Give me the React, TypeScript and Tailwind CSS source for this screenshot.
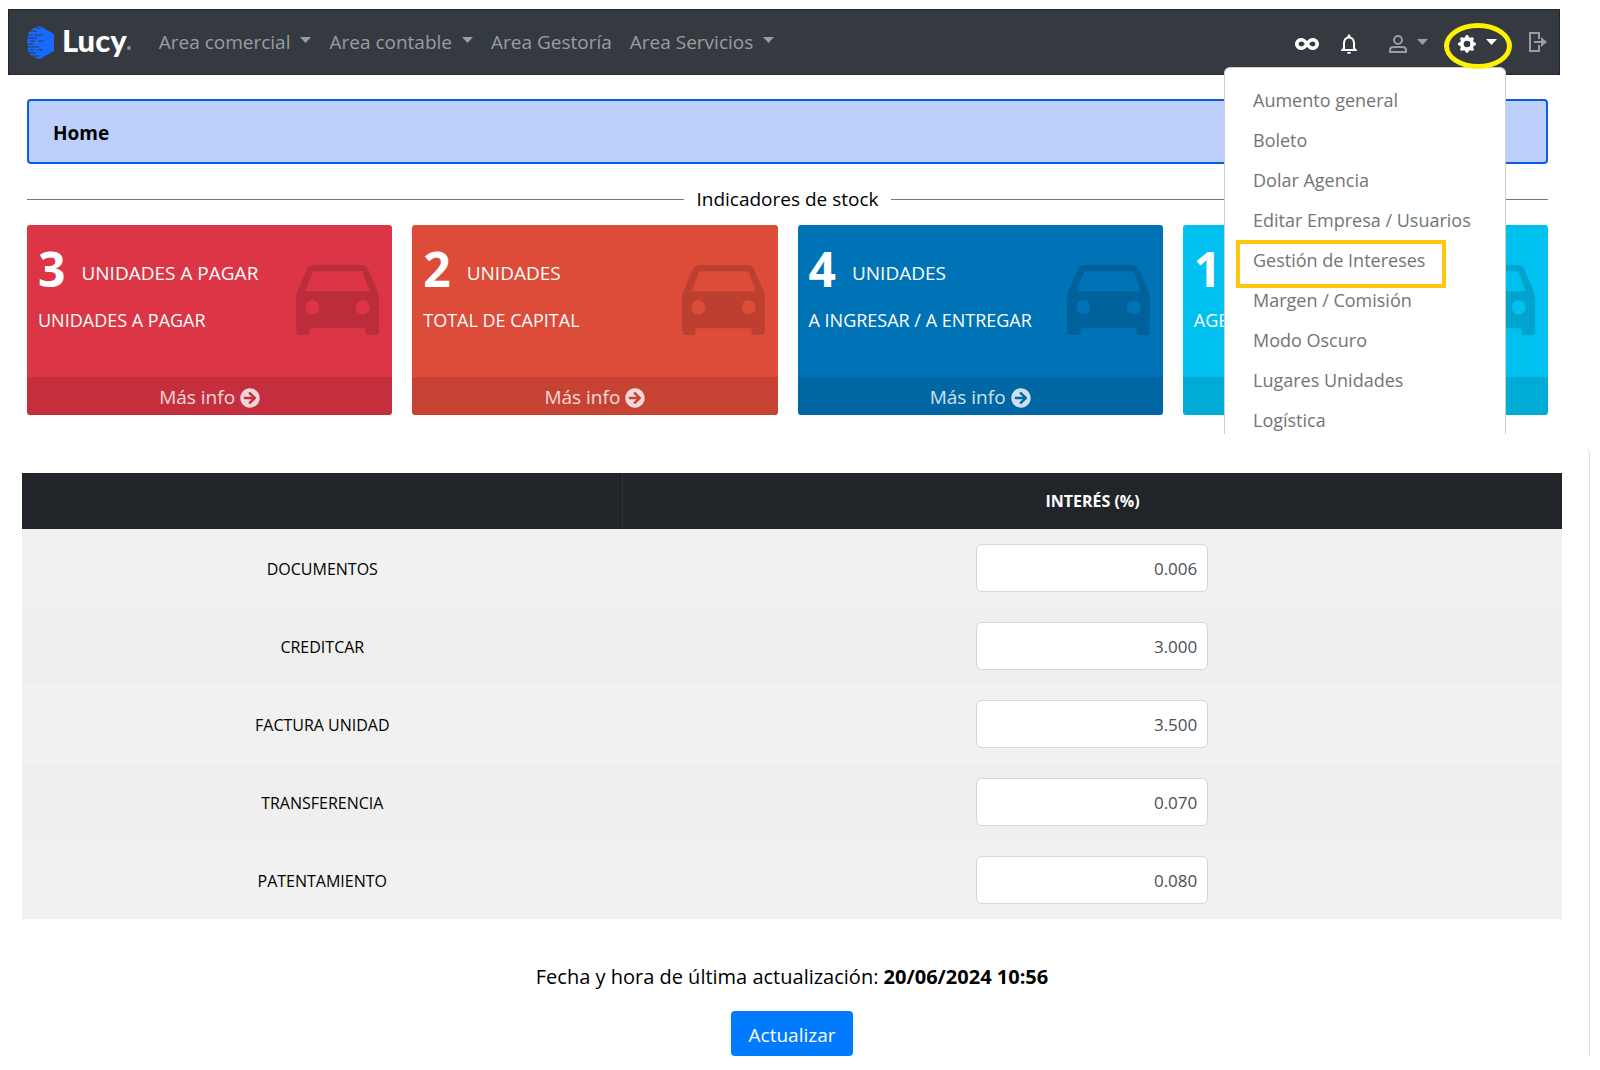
import React, { useState } from 'react';
import { FaInfinity, FaArrowCircleRight } from 'react-icons/fa';
import { MdOutlineNotifications } from 'react-icons/md';
import { BsGearFill } from 'react-icons/bs';

const navItems = [
  { label: 'Area comercial', dropdown: true },
  { label: 'Area contable', dropdown: true },
  { label: 'Area Gestoría', dropdown: false },
  { label: 'Area Servicios', dropdown: true },
];

const menuItems = [
  'Aumento general',
  'Boleto',
  'Dolar Agencia',
  'Editar Empresa / Usuarios',
  'Gestión de Intereses',
  'Margen / Comisión',
  'Modo Oscuro',
  'Lugares Unidades',
  'Logística',
];

const cards = [
  { count: 3, title: 'UNIDADES A PAGAR', subtitle: 'UNIDADES A PAGAR', color: 'bg-[#dc3545]' },
  { count: 2, title: 'UNIDADES', subtitle: 'TOTAL DE CAPITAL', color: 'bg-[#dd4b39]' },
  { count: 4, title: 'UNIDADES', subtitle: 'A INGRESAR / A ENTREGAR', color: 'bg-[#0073b7]' },
  { count: 1, title: '', subtitle: 'AGENCIA', color: 'bg-[#00c0ef]' },
];

const initialRates = [
  { id: 'documentos', label: 'DOCUMENTOS', value: '0.006' },
  { id: 'creditcar', label: 'CREDITCAR', value: '3.000' },
  { id: 'factura', label: 'FACTURA UNIDAD', value: '3.500' },
  { id: 'transferencia', label: 'TRANSFERENCIA', value: '0.070' },
  { id: 'patentamiento', label: 'PATENTAMIENTO', value: '0.080' },
];

function Caret() {
  return (
    <svg viewBox="0 0 11 6" className="mb-1 h-[6px] w-[11px] shrink-0" fill="currentColor" aria-hidden="true">
      <path d="M0 0h11L5.5 6z" />
    </svg>
  );
}

function CarIcon() {
  return (
    <svg viewBox="0 0 249 211" className="w-[83px] shrink-0 text-black/15" fill="currentColor" aria-hidden="true">
      <path
        fillRule="evenodd"
        d="M52 0H197Q211 0 216 12L246 82Q249 90 249 98V198Q249 211 236 211H221Q208 211 208 198V190H41V198Q41 211 28 211H13Q0 211 0 198V98Q0 90 3 82L33 12Q38 0 52 0ZM52 19L28 79H221L199 19ZM49 106a21 21 0 1 0 .1 0ZM200 106a21 21 0 1 0 .1 0Z"
      />
    </svg>
  );
}

function UserIcon() {
  return (
    <svg viewBox="0 0 18 18" className="size-[18px]" fill="none" stroke="currentColor" strokeWidth="2" aria-hidden="true">
      <circle cx="9" cy="5" r="4" />
      <path d="M1 17v-2q0-3 4-3h8q4 0 4 3v2z" />
    </svg>
  );
}

function ExitIcon() {
  return (
    <svg viewBox="0 0 18 20" className="h-5 w-[18px]" fill="none" stroke="currentColor" strokeWidth="2" aria-hidden="true">
      <path d="M10 7V1H1v18h9v-6M5 10h9" />
      <path d="M12 5l6 5-6 5z" fill="currentColor" stroke="none" />
    </svg>
  );
}

function Logo() {
  return (
    <a href="#" className="flex items-center gap-2" aria-label="Lucy">
      <svg viewBox="0 0 27 33" className="h-[33px] w-[27px]" aria-hidden="true">
        <path d="M13 0L27 8V25L13 33Q9 32 5 30Q1 27 1 24L0 17L1 9Q2 5 5 3Q9 1 13 0Z" fill="#1769ff" />
        <path
          d="M0 5H10M9 2H14M0 9H6M8 9H16M0 12H10M3 15H8M11 15H17M0 18H6M0 21H12M3 24H7M10 24H16M0 27H9M4 30H12"
          stroke="#343a40"
          strokeWidth="1"
        />
      </svg>
      <span className="mb-1 flex items-end text-white">
        <span className="font-['Lato',sans-serif] text-[31px] leading-9 font-black">Lucy</span>
        <span className="mb-2 size-1 rounded-full bg-[#8b8f94]" />
      </span>
    </a>
  );
}

function Navbar() {
  const [isMenuOpen, setIsMenuOpen] = useState(true);

  return (
    <header className="mt-[9px] mr-10 ml-2 flex h-[66px] items-center border border-[#23272b] bg-[#343a40] pr-3 pl-[18px] text-[#9a9da0]">
      <Logo />
      <nav className="ml-7 flex items-center gap-[18px] text-[19px]">
        {navItems.map((item) => (
          <a key={item.label} href="#" className="flex items-center gap-[10px] whitespace-nowrap">
            {item.label}
            {item.dropdown && <Caret />}
          </a>
        ))}
      </nav>

      <div className="ml-auto flex items-center self-stretch pt-1">
        <button aria-label="Enlaces" className="text-white">
          <FaInfinity className="size-6" />
        </button>
        <button aria-label="Notificaciones" className="ml-[18px] text-white">
          <MdOutlineNotifications className="size-6" />
        </button>
        <button aria-label="Usuario" className="ml-7 flex items-center gap-[10px]">
          <UserIcon />
          <Caret />
        </button>

        {/* Configuración */}
        <div className="relative ml-[30px] flex items-center self-stretch">
          <button
            aria-label="Configuración"
            aria-expanded={isMenuOpen}
            onClick={() => setIsMenuOpen(!isMenuOpen)}
            className="flex items-center gap-[10px] text-white"
          >
            <BsGearFill className="size-[18px]" />
            <Caret />
          </button>
          {isMenuOpen && (
            <ul className="absolute top-[53px] -right-[9px] z-10 max-h-[367px] w-[282px] overflow-hidden rounded-t-md border border-b-0 border-[#cfcfcf] bg-white pt-3 text-lg text-[#747474]">
              {menuItems.map((item) => (
                <li key={item} className="relative">
                  <a href="#" className="flex h-10 items-center pl-7 whitespace-nowrap">
                    {item}
                  </a>
                  {item === 'Gestión de Intereses' && (
                    <span className="pointer-events-none absolute top-0 left-[11px] h-12 w-[210px] border-4 border-[#fdc70f]" />
                  )}
                </li>
              ))}
            </ul>
          )}
          <span className="pointer-events-none absolute top-[9px] -right-[15px] z-20 h-[46px] w-[68px] rounded-[50%] border-5 border-[#fff200]" />
        </div>

        <button aria-label="Salir" className="mb-1 ml-8">
          <ExitIcon />
        </button>
      </div>
    </header>
  );
}

export default function App() {
  const [rates, setRates] = useState(initialRates);

  const handleRateChange = (id: string, value: string) => {
    setRates(rates.map((rate) => (rate.id === id ? { ...rate, value } : rate)));
  };

  return (
    <div className="flow-root bg-white font-['Open_Sans','Noto_Sans',sans-serif] text-black">
      <Navbar />

      <main>
        <div className="mt-6 mr-[52px] ml-[27px]">
          <h1 className="flex h-[65px] items-center rounded border-2 border-[#0d5ae5] bg-[#bcd0fb] px-6 pt-1 text-[19px] font-bold">Home</h1>

          <div className="mt-[21px] flex items-center gap-3">
            <div className="h-px flex-1 bg-[#777777]" />
            <h2 className="text-[19px] leading-7">Indicadores de stock</h2>
            <div className="h-px flex-1 bg-[#777777]" />
          </div>

          <div className="mt-3 grid grid-cols-4 gap-5">
            {cards.map((card) => (
              <section key={card.subtitle} className={`flex h-[190px] flex-col overflow-hidden rounded-[3px] text-white ${card.color}`}>
                <div className="flex flex-1 items-start justify-between pr-[13px] pl-[11px]">
                  <div className="pt-4 whitespace-nowrap">
                    <p className="flex items-center gap-4">
                      <span className="text-5xl leading-14 font-bold">{card.count}</span>
                      <span className="pt-2 text-[19px]">{card.title}</span>
                    </p>
                    <p className="mt-[9px] text-lg">{card.subtitle}</p>
                  </div>
                  <div className="pt-10">
                    <CarIcon />
                  </div>
                </div>
                <a href="#" className="flex h-[38px] items-center justify-center gap-[5px] bg-black/10 pt-[3px] text-[19px] text-white/80">
                  Más info
                  <FaArrowCircleRight className="size-5" />
                </a>
              </section>
            ))}
          </div>
        </div>

        {/* Tabla de intereses */}
        <section className="mt-8 mr-[10px] flex flex-col items-center rounded-tr-md border-r border-[#d9dcdf] pt-[26px] pr-[27px] pl-[22px]">
          <table className="w-full table-fixed border-collapse text-center">
            <thead>
              <tr className="h-14 bg-[#212529] text-base text-white">
                <th className="w-[39%] border-r border-[#2f3439]" aria-label="Concepto" />
                <th className="font-bold">INTERÉS (%)</th>
              </tr>
            </thead>
            <tbody>
              {rates.map((rate) => (
                <tr key={rate.id} className="h-[78px] odd:bg-[#f1f1f1] even:bg-[#efefef]">
                  <td className="pt-[2px] text-base">
                    <label htmlFor={rate.id}>{rate.label}</label>
                  </td>
                  <td>
                    <input
                      id={rate.id}
                      type="text"
                      value={rate.value}
                      onChange={(e) => handleRateChange(rate.id, e.target.value)}
                      className="h-12 w-[232px] rounded-md border border-[#d3d8dd] bg-white px-[10px] text-right align-middle text-[17px] text-[#495057]"
                    />
                  </td>
                </tr>
              ))}
            </tbody>
          </table>

          <p className="mt-11 text-xl leading-7">
            Fecha y hora de última actualización: <strong className="font-bold">20/06/2024 10:56</strong>
          </p>
          <button className="mt-5 h-[45px] rounded bg-[#007bff] px-[18px] pt-[3px] text-[19px] text-white">Actualizar</button>
        </section>
      </main>
    </div>
  );
}
